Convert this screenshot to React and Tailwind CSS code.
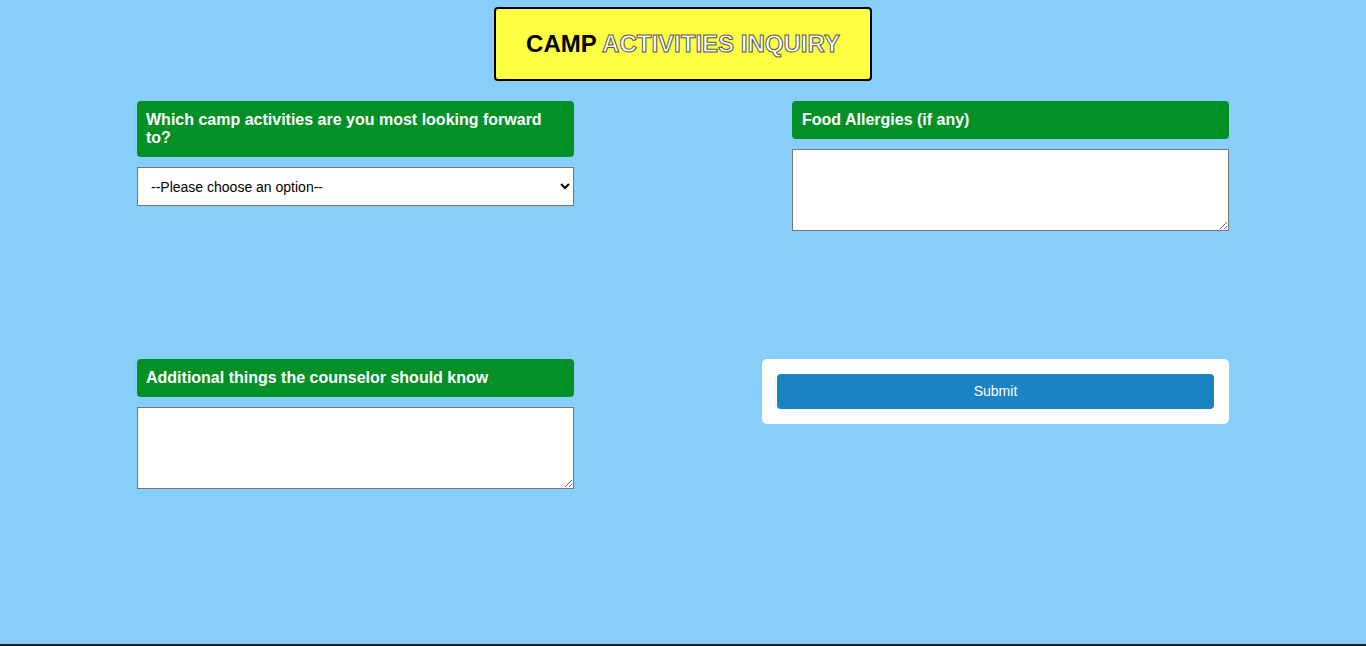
import React from "react";

export default function App() {
  const font = { fontFamily: '"Liberation Sans", Arial, sans-serif' };
  return (
    <div className="min-h-[646px] w-full bg-[#87cefa] flex flex-col" style={font}>
      <div className="flex-1 flex flex-col items-center pt-[7px]">
        <div className="w-[378px] h-[74px] bg-[#ffff44] border-2 border-black rounded-[4px] flex items-center justify-center">
          <h1 className="text-[24px] font-bold leading-none tracking-[0px]">
            <span className="text-black">CAMP</span>{" "}
            <span className="text-white [-webkit-text-stroke:1px_#555]">
              ACTIVITIES INQUIRY
            </span>
          </h1>
        </div>

        <div className="w-[1092px] mt-[20px] grid grid-cols-2 grid-rows-[258px_auto]">
          <div className="flex flex-col gap-[10px] w-[437px]">
            <div className="bg-[#039127] text-white font-bold text-[16px] leading-[18px] rounded-[4px] px-[9px] py-[10px]">
              Which camp activities are you most looking forward to?
            </div>
            <select className="h-[39px] bg-white border border-[#767676] text-[14px] text-black pl-[9px] pr-[4px] appearance-auto">
              <option>--Please choose an option--</option>
            </select>
          </div>
          <div className="flex flex-col gap-[10px] w-[437px] justify-self-end">
            <div className="bg-[#039127] text-white font-bold text-[16px] leading-[18px] rounded-[4px] px-[10px] py-[10px]">
              Food Allergies (if any)
            </div>
            <textarea className="h-[82px] bg-white border border-[#767676] resize-y" />
          </div>

          <div className="flex flex-col gap-[10px] w-[437px]">
            <div className="bg-[#039127] text-white font-bold text-[16px] leading-[18px] rounded-[4px] px-[9px] py-[10px]">
              Additional things the counselor should know
            </div>
            <textarea className="h-[82px] bg-white border border-[#767676] resize-y" />
          </div>
          <div className="justify-self-end self-start w-[467px] bg-white rounded-[5px] p-[15px]">
            <button className="w-full h-[35px] bg-[#1b82c4] text-white text-[14px] rounded-[4px]">
              Submit
            </button>
          </div>
        </div>
      </div>
      <div className="h-[2px] bg-[#1e1e1e]" />
    </div>
  );
}
